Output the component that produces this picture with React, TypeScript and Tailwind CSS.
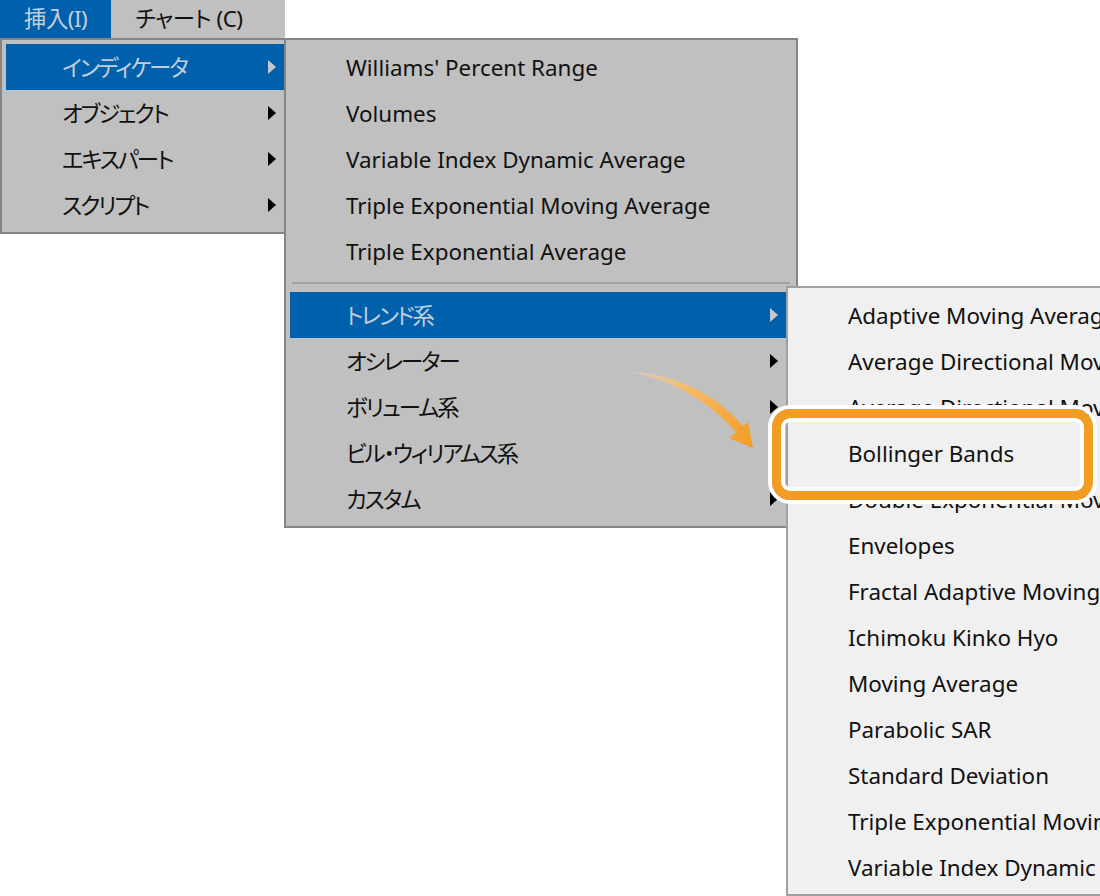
import React from 'react'

const FONT = "font-['Noto_Sans','Noto_Sans_CJK_JP',sans-serif] [font-feature-settings:'palt']"

const insertItems = ['インディケータ', 'オブジェクト', 'エキスパート', 'スクリプト']

const indicatorTop = [
  "Williams' Percent Range",
  'Volumes',
  'Variable Index Dynamic Average',
  'Triple Exponential Moving Average',
  'Triple Exponential Average',
]

const indicatorGroups = ['トレンド系', 'オシレーター', 'ボリューム系', 'ビル・ウィリアムス系', 'カスタム']

const trendItems = [
  'Adaptive Moving Average',
  'Average Directional Movement Index',
  'Average Directional Movement Index Wilder',
  'Bollinger Bands',
  'Double Exponential Moving Average',
  'Envelopes',
  'Fractal Adaptive Moving Average',
  'Ichimoku Kinko Hyo',
  'Moving Average',
  'Parabolic SAR',
  'Standard Deviation',
  'Triple Exponential Moving Average',
  'Variable Index Dynamic Average',
]

function SubArrow({ active }: { active?: boolean }) {
  return (
    <svg width="8" height="14" viewBox="0 0 8 14" className="shrink-0">
      <polygon points="0,0 8,7 0,14" fill={active ? '#c4c8cc' : '#000'} />
    </svg>
  )
}

function MenuItem({ label, active, sub, jp }: { label: string; active?: boolean; sub?: boolean; jp?: boolean }) {
  return (
    <div
      className={`flex items-center h-[46px] pl-[56px] pr-[14px] whitespace-nowrap ${
        active ? 'bg-[#0060ab] text-[#c3cedb]' : 'text-[#111]'
      }`}
    >
      <span className={`flex-1 pt-[2px] ${jp ? 'tracking-[-2px]' : ''}`}>{label}</span>
      {sub && <SubArrow active={active} />}
    </div>
  )
}

export default function App() {
  return (
    <div className={`relative w-[1100px] h-[896px] overflow-hidden bg-white text-[22.4px] ${FONT}`}>
      {/* menu bar */}
      <div className="flex w-[285px] h-[38px] bg-[#c0c0c0] tracking-[-0.5px]">
        <div className="flex items-center px-[24px] bg-[#0060ab] text-[#c3cedb]">挿入(I)</div>
        <div className="flex items-center px-[24px] text-[#111]">チャート (C)</div>
      </div>

      {/* 挿入 menu */}
      <div className="absolute left-0 top-[38px] w-[296px] border-2 border-[#858585] bg-[#c0c0c0] p-[4px]">
        {insertItems.map((t, i) => (
          <MenuItem key={t} label={t} active={i === 0} sub jp />
        ))}
      </div>

      {/* インディケータ submenu */}
      <div className="absolute left-[284px] top-[38px] w-[514px] border-2 border-[#858585] bg-[#c0c0c0] p-[4px]">
        {indicatorTop.map((t) => (
          <MenuItem key={t} label={t} />
        ))}
        <div className="flex items-center h-[18px] px-[2px]">
          <div className="h-[2px] w-full bg-[#a3a3a3]" />
        </div>
        {indicatorGroups.map((t, i) => (
          <MenuItem key={t} label={t} active={i === 0} sub jp />
        ))}
      </div>

      {/* トレンド系 submenu */}
      <div className="absolute left-[786px] top-[286px] w-[420px] border-2 border-[#a0a0a0] bg-[#f0f0f0] p-[4px]">
        {trendItems.map((t) => (
          <MenuItem key={t} label={t} />
        ))}
      </div>

      {/* highlight frame */}
      <div className="absolute left-[772px] top-[409px] w-[321px] h-[91px] rounded-[18px] border-[9px] border-[#f39c24] shadow-[0_0_0_4px_#fff,inset_0_0_0_4px_#fff]" />

      {/* curved arrow */}
      <svg className="absolute left-[620px] top-[360px]" width="140" height="100" viewBox="0 0 140 100">
        <defs>
          <linearGradient id="arrowGrad" x1="8" y1="12" x2="133" y2="87" gradientUnits="userSpaceOnUse">
            <stop offset="0" stopColor="#f8d7a4" stopOpacity="0.3" />
            <stop offset="0.45" stopColor="#f6b860" />
            <stop offset="1" stopColor="#f39c24" />
          </linearGradient>
        </defs>
        <path
          d="M 8 12 C 50 11, 96 34, 123 66 L 128 62 L 133 88 L 109 78 L 116 72 C 91 43, 52 19, 8 12 Z"
          fill="url(#arrowGrad)"
        />
      </svg>
    </div>
  )
}
